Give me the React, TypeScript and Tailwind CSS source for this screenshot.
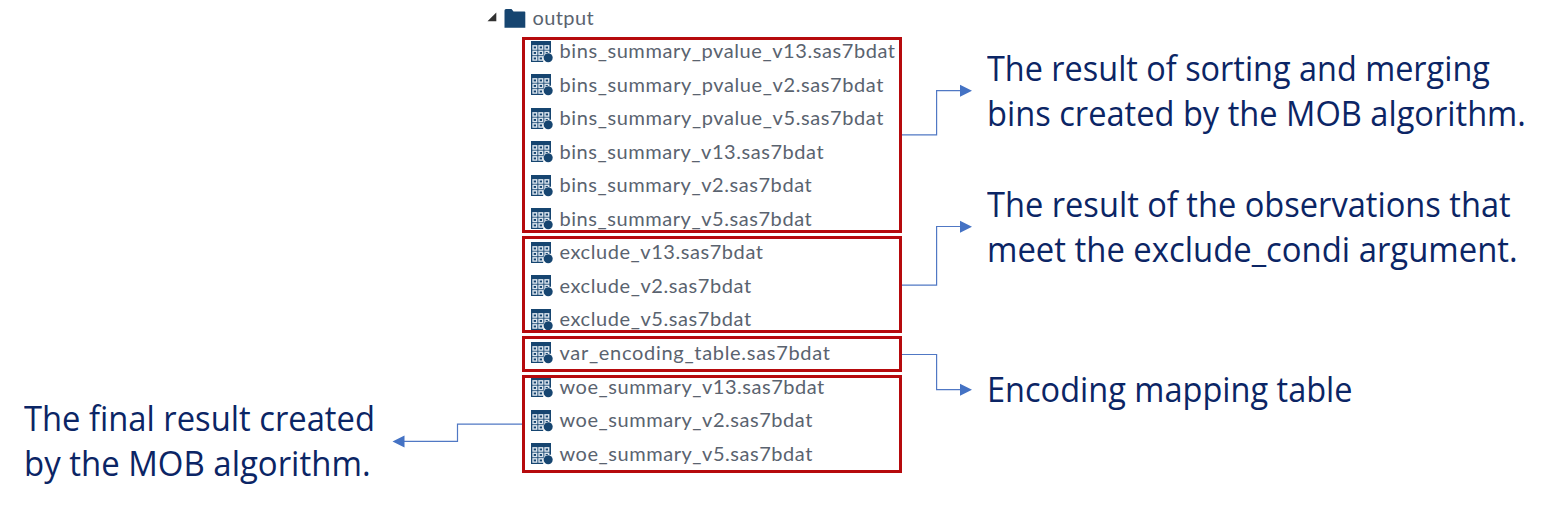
type Row = { name: string; fit: string };

const pvalueFiles: Row[] = [
  { name: "bins_summary_pvalue_v13.sas7bdat", fit: "tracking-[0.58px]" },
  { name: "bins_summary_pvalue_v2.sas7bdat", fit: "tracking-[0.6px]" },
  { name: "bins_summary_pvalue_v5.sas7bdat", fit: "tracking-[0.6px]" },
  { name: "bins_summary_v13.sas7bdat", fit: "tracking-[0.55px]" },
  { name: "bins_summary_v2.sas7bdat", fit: "tracking-[0.56px]" },
  { name: "bins_summary_v5.sas7bdat", fit: "tracking-[0.56px]" },
];
const excludeFiles: Row[] = [
  { name: "exclude_v13.sas7bdat", fit: "tracking-[0.56px]" },
  { name: "exclude_v2.sas7bdat", fit: "tracking-[0.58px]" },
  { name: "exclude_v5.sas7bdat", fit: "tracking-[0.58px]" },
];
const encodingFiles: Row[] = [
  { name: "var_encoding_table.sas7bdat", fit: "tracking-[0.7px]" },
];
const woeFiles: Row[] = [
  { name: "woe_summary_v13.sas7bdat", fit: "tracking-[0.53px]" },
  { name: "woe_summary_v2.sas7bdat", fit: "tracking-[0.54px]" },
  { name: "woe_summary_v5.sas7bdat", fit: "tracking-[0.54px]" },
];

function TableIcon() {
  return (
    <svg width="22" height="22" viewBox="0 0 22 22" className="shrink-0">
      <rect x="0" y="0" width="20" height="21" fill="#164570" />
      {[4.8, 10.3, 15.8].map((y) =>
        [2, 8, 14].map((x) => (
          <rect key={`${x}-${y}`} x={x} y={y} width="3.7" height="3.3" fill="#164570" stroke="#dbe5ee" strokeWidth="1.4" />
        ))
      )}
      <path d="M12.200 22v-5.300a5 5 0 0 1 5-5h4.800V22z" fill="#fff" />
      <circle cx="17.200" cy="16.800" r="4.500" fill="#164570" />
    </svg>
  );
}

function FileGroup({ rows, box, list }: { rows: Row[]; box: string; list: string }) {
  return (
    <div className={`w-[380px] overflow-hidden border-[3px] border-[#b60a0d] ${box}`}>
      <ul className={list}>
        {rows.map((r) => (
          <li key={r.name} className="flex h-[33.5px] items-center pl-[6px]">
            <TableIcon />
            <span className={`-mt-[3px] ml-[6.5px] whitespace-nowrap text-[20px] leading-[16px] text-[#5a636f] ${r.fit}`}>{r.name}</span>
          </li>
        ))}
      </ul>
    </div>
  );
}

function Line({ text, fit }: { text: string; fit: string }) {
  return <span className={`block w-max origin-left whitespace-nowrap ${fit}`}>{text}</span>;
}

function Connectors() {
  return (
    <svg className="pointer-events-none absolute inset-0" width="1566" height="509" viewBox="0 0 1566 509">
      <g fill="none" stroke="#5078c4" strokeWidth="1.2">
        <path d="M902 134.800H936.600V90.700H962" />
        <path d="M902 285.200H936.600V226.500H962" />
        <path d="M902 354.500H936.600V389.600H962" />
        <path d="M522 424.200H457.500V441.300H402" />
      </g>
      <g fill="#4472c4">
        <path d="M960 84.800L972 90.800L960 96.800z" />
        <path d="M960 220.700L972 226.700L960 232.700z" />
        <path d="M960 383.700L972 389.700L960 395.700z" />
        <path d="M404.500 435.400L392.500 441.400L404.500 447.400z" />
      </g>
    </svg>
  );
}

export default function App() {
  return (
    <main className="relative flex h-[509px] w-[1566px] overflow-hidden bg-white font-['Lato','Open_Sans',sans-serif]">
      <aside className="w-[486px] pt-[396px] pl-[24px] font-['Open_Sans',sans-serif] text-[34px] leading-[45px] text-[#0b2565]">
        <p>
          <Line text="The final result created" fit="scale-x-[0.963]" />
          <Line text="by the MOB algorithm." fit="scale-x-[0.969]" />
        </p>
      </aside>

      <section className="w-[501px]">
        <div className="flex h-[37px] items-center">
          <svg width="40" height="37" viewBox="0 0 40 37">
            <path d="M10.300 12.500V21.300H1.500z" fill="#303030" />
            <path d="M18.500 10.500q0-1.500 1.500-1.500h5.500l2 2.500h11q.800 0 .800.800V27.800H18.500z" fill="#164570" />
          </svg>
          <span className="-mt-[4px] ml-[6.5px] text-[20px] leading-[24px] tracking-[0.4px] text-[#5a636f]">output</span>
        </div>
        <div className="flex flex-col gap-[3px] pl-[36px]">
          <FileGroup rows={pvalueFiles} box="h-[196px]" list="-mt-[5px]" />
          <FileGroup rows={excludeFiles} box="h-[97px]" list="-mt-[3px]" />
          <FileGroup rows={encodingFiles} box="h-[36px]" list="-mt-[2.5px]" />
          <FileGroup rows={woeFiles} box="h-[98px]" list="-mt-[7.5px]" />
        </div>
      </section>

      <aside className="flex flex-col pt-[46px] font-['Open_Sans',sans-serif] text-[34px] leading-[45px] text-[#0b2565]">
        <p>
          <Line text="The result of sorting and merging" fit="scale-x-[0.9535]" />
          <Line text="bins created by the MOB algorithm." fit="scale-x-[0.959]" />
        </p>
        <p className="mt-[46px]">
          <Line text="The result of the observations that" fit="scale-x-[0.959]" />
          <Line text="meet the exclude_condi argument." fit="scale-x-[0.966]" />
        </p>
        <p className="mt-[95px]">
          <Line text="Encoding mapping table" fit="scale-x-[0.9565]" />
        </p>
      </aside>

      <Connectors />
    </main>
  );
}
